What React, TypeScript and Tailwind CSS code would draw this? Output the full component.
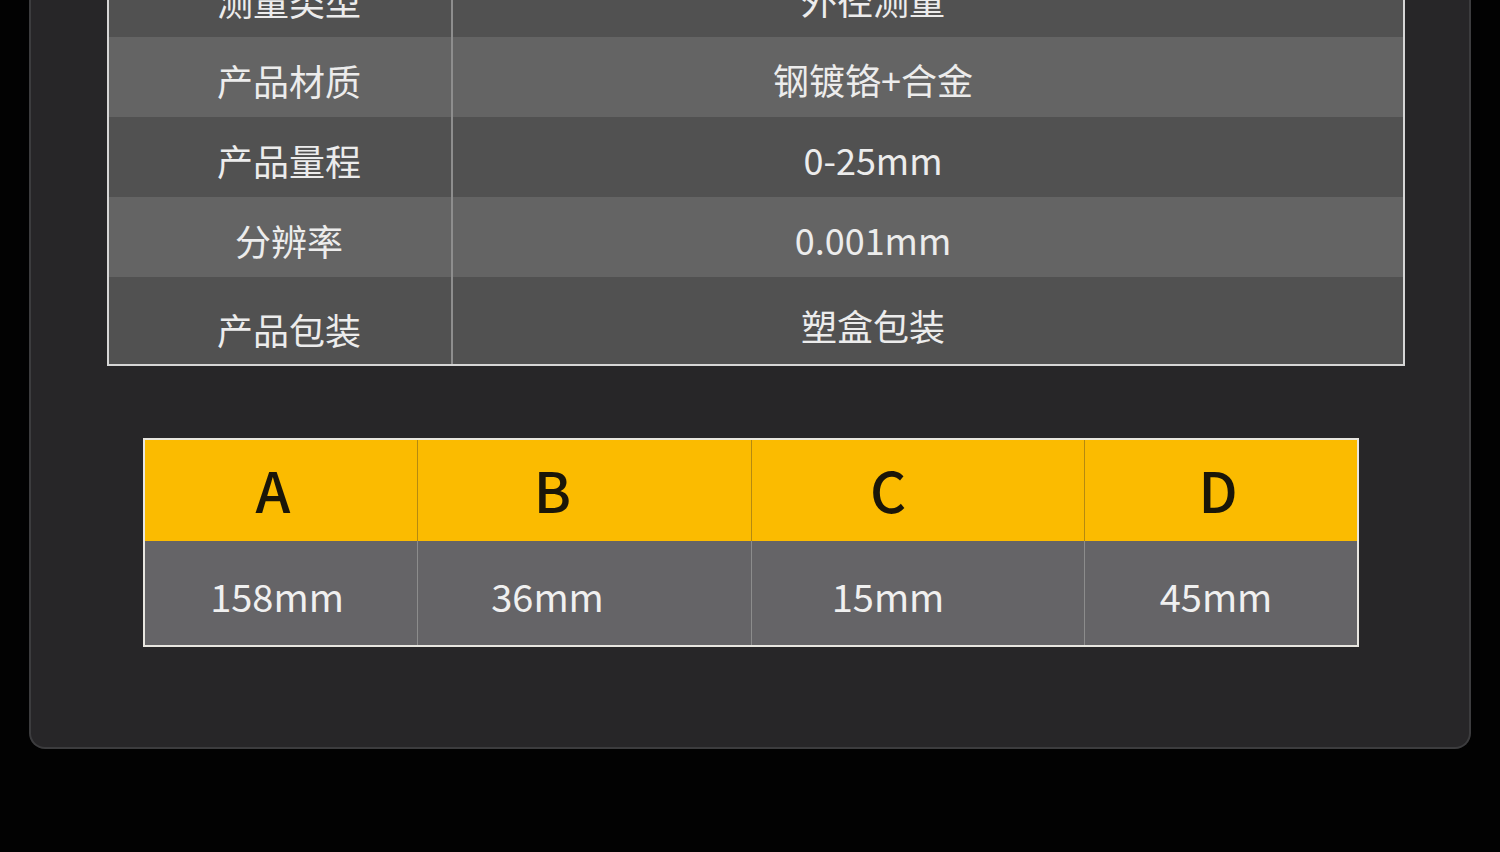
import React from "react";

const specs = [
  { name: "测量类型", value: "外径测量" },
  { name: "产品材质", value: "钢镀铬+合金" },
  { name: "产品量程", value: "0-25mm" },
  { name: "分辨率", value: "0.001mm" },
  { name: "产品包装", value: "塑盒包装" },
];

const sizes = [
  { label: "A", value: "158mm", w: "w-[273px]", shift: "pr-[16px]", vshift: "pr-[8px]" },
  { label: "B", value: "36mm", w: "w-[334px]", shift: "pr-[64px]", vshift: "pr-[74px]" },
  { label: "C", value: "15mm", w: "w-[333px]", shift: "pr-[60px]", vshift: "pr-[60px]" },
  { label: "D", value: "45mm", w: "flex-1", shift: "pr-[6px]", vshift: "pr-[10px]" },
];

const font = { fontFamily: '"Noto Sans CJK SC", "Noto Sans", sans-serif' };

export default function App(): JSX.Element {
  return (
    <div className="h-[852px] w-full bg-[#020202] overflow-hidden" style={font}>
      <div className="mx-[29px] -mt-[43px] h-[792px] rounded-b-[16px] border-2 border-t-0 border-[#3c3c3e] bg-[#272628] pl-[76px] pr-[64px]">
        {/* spec table */}
        <div className="border-2 border-[#d6d6d6] border-t-0">
          {specs.map((row, i) => {
            const last = i === specs.length - 1;
            return (
              <div
                key={row.name}
                className={`flex ${i % 2 === 0 ? "bg-[#515151]" : "bg-[#646464]"} ${
                  last ? "h-[87px]" : "h-[80px]"
                }`}
              >
                <div
                  className={`w-[344px] shrink-0 border-r-2 border-[#8e8e8e] flex items-center justify-center pl-[18px] ${
                    last ? "pt-[16px]" : "pt-[6px]"
                  } text-[36px] text-[#ececec]`}
                >
                  {row.name}
                </div>
                <div
                  className={`flex-1 flex items-center justify-center pr-[110px] ${
                    last ? "pt-[8px]" : "pt-[4px]"
                  } text-[36px] text-[#ececec]`}
                >
                  {row.value}
                </div>
              </div>
            );
          })}
        </div>

        {/* dimension table */}
        <div className="mt-[72px] ml-[36px] w-[1216px] border-2 border-[#e8e6e0]">
          <div className="flex h-[101px] bg-[#fbbb00]">
            {sizes.map((s, i) => (
              <div
                key={s.label}
                className={`${s.w} flex items-center justify-center ${s.shift} pb-[4px] text-[56px] font-medium text-[#1a1608] ${
                  i < sizes.length - 1 ? "border-r border-[#b58a10]" : ""
                }`}
              >
                {s.label}
              </div>
            ))}
          </div>
          <div className="flex h-[104px] bg-[#656467]">
            {sizes.map((s, i) => (
              <div
                key={s.value}
                className={`${s.w} flex items-center justify-center ${s.vshift} pt-[4px] text-[38px] text-[#f0f0f0] ${
                  i < sizes.length - 1 ? "border-r border-[#8c8c8c]" : ""
                }`}
              >
                {s.value}
              </div>
            ))}
          </div>
        </div>
      </div>
    </div>
  );
}
